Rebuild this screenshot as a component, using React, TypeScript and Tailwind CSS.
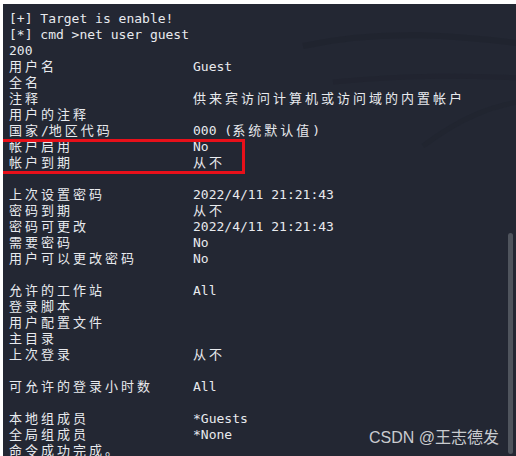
import React from "react";

const rows: [string, string][] = [
  ["[+] Target is enable!", ""],
  ["[*] cmd >net user guest", ""],
  ["200", ""],
  ["用户名", "Guest"],
  ["全名", ""],
  ["注释", "供来宾访问计算机或访问域的内置帐户"],
  ["用户的注释", ""],
  ["国家/地区代码", "000 (系统默认值)"],
  ["帐户启用", "No"],
  ["帐户到期", "从不"],
  ["", ""],
  ["上次设置密码", "2022/4/11 21:21:43"],
  ["密码到期", "从不"],
  ["密码可更改", "2022/4/11 21:21:43"],
  ["需要密码", "No"],
  ["用户可以更改密码", "No"],
  ["", ""],
  ["允许的工作站", "All"],
  ["登录脚本", ""],
  ["用户配置文件", ""],
  ["主目录", ""],
  ["上次登录", "从不"],
  ["", ""],
  ["可允许的登录小时数", "All"],
  ["", ""],
  ["本地组成员", "*Guests"],
  ["全局组成员", "*None"],
  ["命令成功完成。", ""],
];

function isWide(ch: string) {
  const c = ch.codePointAt(0) || 0;
  return c >= 0x2e80;
}

function Term({ text }: { text: string }) {
  const parts: React.ReactNode[] = [];
  let buf = "";
  let k = 0;
  for (const ch of Array.from(text)) {
    if (isWide(ch)) {
      if (buf) {
        parts.push(<span key={k++}>{buf}</span>);
        buf = "";
      }
      parts.push(
        <span key={k++} className="inline-block w-[16px] text-left">
          {ch}
        </span>
      );
    } else {
      buf += ch;
    }
  }
  if (buf) parts.push(<span key={k++}>{buf}</span>);
  return <>{parts}</>;
}

export default function App() {
  return (
    <div className="w-[516px] h-[456px] bg-white pt-[4px] pl-[3px] overflow-hidden">
      <div
        className="relative w-full h-full bg-[#232733] overflow-hidden text-[#e8eaee] text-[13px]"
        style={{ fontFamily: '"DejaVu Sans Mono", "Noto Sans CJK SC", monospace' }}
      >
        <svg className="absolute left-0 top-0" width="513" height="452" viewBox="0 0 513 452" fill="none">
          <path d="M300 42 C 380 24, 460 32, 520 40" stroke="#1e222c" strokeWidth="6" opacity="0.5" />
          <path d="M330 78 C 410 70, 470 72, 520 74" stroke="#1e222c" strokeWidth="5" opacity="0.45" />
          <path d="M420 142 C 460 112, 490 102, 520 97" stroke="#1e222c" strokeWidth="5" opacity="0.4" />
        </svg>
        <div className="relative pt-[7px] pl-[6px]">
          {rows.map(([a, b], i) => (
            <div key={i} className="flex h-[16px] leading-[16px] whitespace-pre">
              <div className="w-[184px] shrink-0">
                <Term text={a} />
              </div>
              <div>
                <Term text={b} />
              </div>
            </div>
          ))}
        </div>
        <div className="absolute left-0 top-[135px] w-[242px] h-[35px] border-[3px] border-l-0 border-[#e8101a]" />
        <div className="absolute left-[505px] top-[229px] w-[5px] h-[221px] rounded-full bg-[#4f545d]" />
        <div
          className="absolute left-[366px] top-[424px] text-[16px] leading-[20px] text-[#c9cbcf]"
          style={{ fontFamily: '"Liberation Sans", "Noto Sans CJK SC", sans-serif' }}
        >
          CSDN @王志德发
        </div>
      </div>
    </div>
  );
}
